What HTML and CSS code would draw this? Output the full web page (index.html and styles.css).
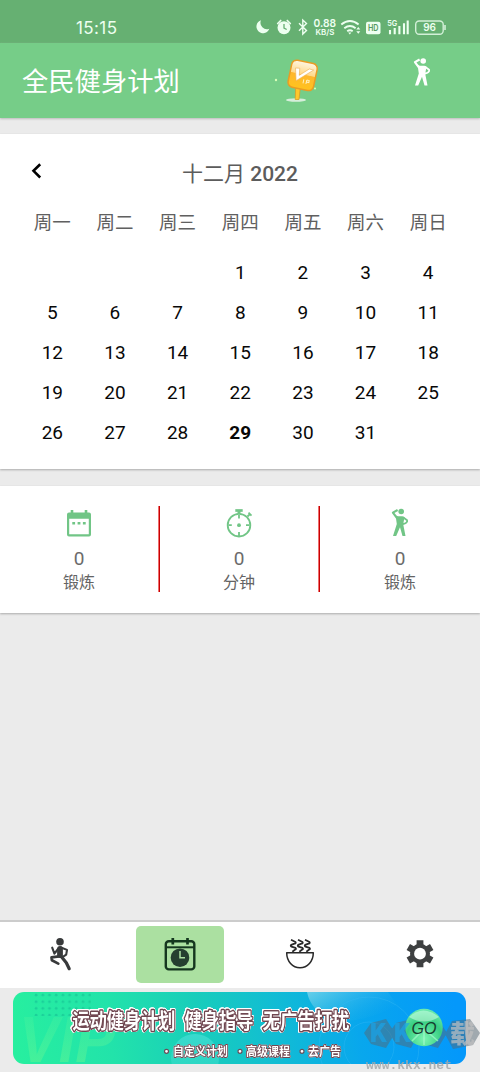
FILE: index.html
```html
<!DOCTYPE html>
<html lang="zh-CN">
<head>
<meta charset="utf-8">
<title>全民健身计划</title>
<link rel="stylesheet" href="styles.css">
</head>
<body>
<svg class="defs" width="0" height="0">
  <symbol id="pose" viewBox="0 0 18 29">
    <circle cx="10.2" cy="3.5" r="2.8" fill="currentColor"/>
    <path d="M6.6 2 1.9 4.6 6 10" fill="none" stroke="currentColor" stroke-width="2.1" stroke-linejoin="round"/>
    <path d="M4.6 7.6 7 8.2h4.5l2 1-1.3 7 2.3 11.8h-3L9 19.2 5.2 28H2l3.8-12z" fill="currentColor"/>
    <path d="M12 9.2l4.1 3.1c.6 1.8-1.1 3.2-4.2 3.7" fill="none" stroke="currentColor" stroke-width="1.8" stroke-linejoin="round"/>
  </symbol>
</svg>
<main class="screen">
  <div class="status">
    <span class="clock">15:15</span>
    <svg class="status-icons" viewBox="0 0 194 20">
      <g fill="#edfff0">
        <path d="M6 2.3A6.6 6.6 0 1 0 14.3 10.7 6.4 6.4 0 0 1 6 2.3z"/>
        <circle cx="29" cy="9.7" r="6.5"/>
        <path d="M22.7 5.5l3-3M35.3 5.5l-3-3" stroke="#edfff0" stroke-width="1.7" stroke-linecap="round"/>
        <path d="M29 6v4l2.7 1.5" fill="none" stroke="#66b072" stroke-width="1.3"/>
      </g>
      <path d="M44 5.2l7.5 7.3L47.8 16V2l3.7 3.4L44 12.8" fill="none" stroke="#edfff0" stroke-width="1.4"/>
      <text x="58.5" y="9" textLength="22.5" lengthAdjust="spacingAndGlyphs" class="net-speed">0.88</text>
      <text x="60.5" y="17" textLength="19" lengthAdjust="spacingAndGlyphs" class="net-unit">KB/S</text>
      <g fill="none" stroke="#edfff0" stroke-width="1.9">
        <path d="M86.3 6.5q8.7-7 17.3 0M89.3 10.2q5.7-4.5 11.3 0M92.2 13.3q2.8-2 5.5 0"/>
      </g>
      <path d="M93.2 14.5h3.2l-1.6 2zM101.3 11.6l2-2.5 2 2.500zM101.3 13.2l2 2.500 2-2.500z" fill="#edfff0"/>
      <rect x="111" y="3.700" width="14.500" height="12.600" rx="2" fill="#edfff0"/>
      <text x="112.900" y="13.400" textLength="10.600" lengthAdjust="spacingAndGlyphs" class="hd">HD</text>
      <text x="132.300" y="8.400" textLength="10" lengthAdjust="spacingAndGlyphs" class="five-g">5G</text>
      <path d="M135 12v4.200M139.700 10v6.200M144.400 8v8.200M149 5.300v10.900M152.700 2.500v13.700" stroke="#edfff0" stroke-width="2.100"/>
      <rect x="160.700" y="3" width="27.500" height="13.200" rx="3.500" fill="none" stroke="#d3f0d8" stroke-width="1.400"/>
      <path d="M190 7v5" stroke="#d3f0d8" stroke-width="1.600"/>
      <text x="168.300" y="13.300" textLength="12.500" class="battery">96</text>
    </svg>
  </div>
  <header class="header">
    <h1 class="title">全民健身计划</h1>
    <svg class="sign" viewBox="0 0 46 48">
      <defs>
        <linearGradient id="gold" x1="0" y1="0" x2="0" y2="1">
          <stop offset="0" stop-color="#fff6e2"/><stop offset=".45" stop-color="#ffd98b"/>
          <stop offset=".48" stop-color="#ffb72d"/><stop offset="1" stop-color="#ffc31e"/>
        </linearGradient>
      </defs>
      <ellipse cx="22" cy="44" rx="10" ry="1.8" fill="#d6eedb"/>
      <path d="M21.700 31.500h4.600l-1.300 12h-3.800z" fill="#ffc72c" stroke="#dd9d25" stroke-width=".8"/>
      <g transform="rotate(12 28 20)">
        <rect x="15.500" y="5.500" width="26" height="27.500" rx="5" fill="url(#gold)" stroke="#e99c24" stroke-width="1.500"/>
        <path d="M20 13.500l4.200-.6 1 7 8.500-8.300 4.500.2-15 14z" fill="#fff" stroke="#eeb25a" stroke-width=".6"/>
        <path d="M30.500 23v4M33.500 23v4M33.500 23h2.500v2h-2.500" fill="none" stroke="#fff1bd" stroke-width="1"/>
      </g>
      <circle cx="2" cy="24" r="1.200" fill="#d8ffb8"/>
      <circle cx="41" cy="32.500" r="1" fill="#d8ffb8"/>
    </svg>
    <svg class="header-pose"><use href="#pose"/></svg>
  </header>
  <section class="card calendar">
    <div class="month">
      <svg class="back" viewBox="0 0 12 18"><path d="M9.200 2.200 2.500 8.800l6.700 6.700" fill="none" stroke="#000" stroke-width="2.600"/></svg>
      <h2 class="month-name">十二月 <b>2022</b></h2>
    </div>
    <div class="week names"><span>周一</span><span>周二</span><span>周三</span><span>周四</span><span>周五</span><span>周六</span><span>周日</span></div>
    <div class="week"><span></span><span></span><span></span><span>1</span><span>2</span><span>3</span><span>4</span></div>
    <div class="week"><span>5</span><span>6</span><span>7</span><span>8</span><span>9</span><span>10</span><span>11</span></div>
    <div class="week"><span>12</span><span>13</span><span>14</span><span>15</span><span>16</span><span>17</span><span>18</span></div>
    <div class="week"><span>19</span><span>20</span><span>21</span><span>22</span><span>23</span><span>24</span><span>25</span></div>
    <div class="week"><span>26</span><span>27</span><span>28</span><span class="today">29</span><span>30</span><span>31</span><span></span></div>
  </section>
  <section class="card stats">
    <div class="stat">
      <svg class="stat-icon" viewBox="0 0 30 30">
        <path d="M5 4.500h20a2 2 0 0 1 2 2v20a2 2 0 0 1-2 2H5a2 2 0 0 1-2-2v-20a2 2 0 0 1 2-2zM5.200 10.800v15.500h19.600V10.800z" fill-rule="evenodd"/>
        <path d="M8 5V2M22 5V2" stroke="#71c586" stroke-width="2.600"/>
        <path d="M8.300 14h2.800v2.600H8.300zM13.600 14h2.800v2.600h-2.800zM18.900 14h2.800v2.600h-2.800z"/>
      </svg>
      <span class="value">0</span><span class="label">锻炼</span>
    </div>
    <i class="rule"></i>
    <div class="stat">
      <svg class="stat-icon" viewBox="0 0 30 30">
        <g fill="none" stroke="#71c586" stroke-width="1.800">
          <circle cx="15" cy="17.200" r="11.300"/>
          <path d="M11.300 2.500h7.400" stroke-width="2.700"/>
          <path d="M15 2v4" stroke-width="3"/>
          <path d="M23.500 8.500l2.500-2.500M24.500 4.600l3 3M15 7v3.500M15 24v4M4.500 17.200h3.300M22 17.200h3.500"/>
        </g>
        <circle cx="15" cy="17.200" r="1.900"/>
      </svg>
      <span class="value">0</span><span class="label">分钟</span>
    </div>
    <i class="rule"></i>
    <div class="stat">
      <svg class="stat-icon"><use href="#pose" x="5" y="1" width="20" height="29"/></svg>
      <span class="value">0</span><span class="label">锻炼</span>
    </div>
  </section>
  <nav class="nav">
    <a class="tab"><svg class="tab-icon" viewBox="0 0 36 36">
      <g fill="none" stroke="#383a3b" stroke-linecap="round" stroke-linejoin="round">
        <circle cx="18" cy="5.700" r="3.800" fill="#383a3b" stroke="none"/>
        <path d="M18 13v6" stroke-width="5.800"/>
        <path d="M16 13l-3.600 4.700-2.200-6M19 11.500l6 2.400-.8 4.800-3 2" stroke-width="2.100"/>
        <path d="M17 20.300l-7.500 1 .4 3 6.400 3.300" stroke-width="2.700"/>
        <path d="M19 20.300l5.300 6.400 2.900 6" stroke-width="3.200"/>
      </g></svg></a>
    <a class="tab active"><svg class="tab-icon" viewBox="0 0 36 36">
      <g fill="none" stroke="#15371f">
        <rect x="3.800" y="5.200" width="28.500" height="28.200" rx="3" stroke-width="2.400"/>
        <path d="M3.500 11.300h29" stroke-width="2"/>
        <path d="M10.800 2v6.500M25.500 2v6.500" stroke-width="2.700"/>
      </g>
      <circle cx="18" cy="21.700" r="9.300" fill="#253f30"/>
      <path d="M18 15v6.700h5" fill="none" stroke="#abe0a1" stroke-width="1.500"/></svg></a>
    <a class="tab"><svg class="tab-icon" viewBox="0 0 36 36">
      <g fill="none" stroke="#292929" stroke-width="1.500" stroke-linejoin="round">
        <path d="M4.700 16.800h26.600c0 8.500-5.800 15-13.300 15s-13.300-6.500-13.300-15z"/>
        <g id="steam" stroke-width="1.800"><path d="M9 3.800l4.500 2.200q.8 1-1 1.700L9.200 8.900q-1 1 .3 1.800l4 1.200q1.200 1-.6 1.900L10.300 15.700"/></g>
        <use href="#steam" x="7"/><use href="#steam" x="14"/>
      </g></svg></a>
    <a class="tab"><svg class="tab-icon" viewBox="0 0 36 36">
      <g stroke="#3e4041" stroke-width="6.800">
        <path d="M18 4.200V31.200M6.300 11l23.400 13.500M6.300 24.500L29.700 11"/>
      </g>
      <circle cx="18" cy="17.700" r="10" fill="#3e4041"/><circle cx="18" cy="17.700" r="5.900" fill="#fff"/>
    </svg></a>
  </nav>
  <footer class="promo">
    <svg class="banner" viewBox="0 0 453 72">
      <defs>
        <linearGradient id="sea" gradientUnits="userSpaceOnUse" x1="0" y1="50" x2="440" y2="0"><stop offset="0" stop-color="#27ef9f"/><stop offset=".22" stop-color="#22e3aa"/><stop offset=".42" stop-color="#18cdbb"/><stop offset=".58" stop-color="#12bed2"/><stop offset=".78" stop-color="#08a7ed"/><stop offset="1" stop-color="#0498fb"/></linearGradient>
        <linearGradient id="glow" x1="0" y1="0" x2="1" y2=".6"><stop offset="0" stop-color="#85d8ed" stop-opacity=".75"/><stop offset="1" stop-color="#20aee9" stop-opacity="0"/></linearGradient>
        <linearGradient id="bubble" x1="0" y1="0" x2="0" y2="1"><stop offset="0" stop-color="#45ddd5"/><stop offset="1" stop-color="#37ddc6" stop-opacity=".6"/></linearGradient>
        <linearGradient id="vip" x1="0" y1="0" x2="0" y2="1"><stop offset="0" stop-color="#57f6a0" stop-opacity=".15"/><stop offset="1" stop-color="#6bf58f" stop-opacity=".55"/></linearGradient>
        <radialGradient id="ball" cx=".5" cy=".8" r=".8"><stop offset="0" stop-color="#7bf5b2"/><stop offset=".6" stop-color="#38ce82"/><stop offset="1" stop-color="#6eedb1"/></radialGradient>
        <pattern id="dots" width="6.700" height="6.700" patternUnits="userSpaceOnUse"><circle cx="3" cy="3" r="1.400" fill="#1bd09a"/></pattern>
      </defs>
      <rect width="453" height="72" fill="url(#sea)"/>
      <rect x="20" width="58" height="24" fill="url(#dots)"/>
      <text x="6" y="70" class="vip" textLength="96" lengthAdjust="spacingAndGlyphs" fill="url(#vip)">VIP</text>
      <circle cx="182" cy="66" r="24" fill="url(#bubble)" opacity=".75"/>
      <path d="M294 0q5 24 35 29 27 0 55-16l-9-13z" fill="url(#glow)"/>
      <g fill="none" stroke="#36b9f5" opacity=".4"><circle cx="356" cy="55" r="25"/><circle cx="356" cy="55" r="50"/></g>
      <g class="slogan">
        <text x="59.500" y="36" textLength="103" lengthAdjust="spacingAndGlyphs">运动健身计划</text>
        <text x="171.500" y="36" textLength="69" lengthAdjust="spacingAndGlyphs">健身指导</text>
        <text x="249.500" y="36" textLength="87" lengthAdjust="spacingAndGlyphs">无广告打扰</text>
      </g>
      <g class="features">
        <text x="160" y="63.500" textLength="55" lengthAdjust="spacingAndGlyphs">自定义计划</text>
        <text x="233" y="63.500" textLength="44" lengthAdjust="spacingAndGlyphs">高级课程</text>
        <text x="295" y="63.500" textLength="33" lengthAdjust="spacingAndGlyphs">去广告</text>
      </g>
      <g fill="#fff" stroke="#69505b" stroke-width="1.200"><circle cx="153.500" cy="59.300" r="2"/><circle cx="227" cy="59.300" r="2"/><circle cx="289" cy="59.300" r="2"/></g>
    </svg>
    <svg class="watermark" viewBox="0 0 116 69">
      <g opacity=".5">
        <path d="M7 20l15-4 9 14-9 15-15-4-7-11zM32 20l15-4 8 14-8 15-15-4-7-11zM60 20l14-4 9 14-9 15-14-4-6-11zM88 18l18-2 10 14-7 12-20 4-8-15z" fill="#566774"/>
      </g>
      <circle cx="60" cy="24.500" r="18.700" fill="url(#ball)"/>
      <path d="M45 14q14-13 30 0-15 9-30 0z" fill="#cfffe6" opacity=".55"/>
      <path d="M60 26v16M60 26l14 12M60 26L48 38" stroke="#a9fbd0" stroke-width="1.600" opacity=".65"/>
      <g class="mark"><text x="5" y="39">K</text><text x="29" y="39">K</text><text x="86" y="40" class="mark-cn">载</text></g>
      <text x="47.500" y="30.500" textLength="25" lengthAdjust="spacingAndGlyphs" class="go">GO</text>
      <text x="2" y="65.500" textLength="86" lengthAdjust="spacingAndGlyphs" class="site">www.kkx.net</text>
    </svg>
  </footer>
</main>
</body>
</html>
```

FILE: styles.css
```css
* { box-sizing: border-box; }
body { margin: 0; background: #ebebeb; font-family: Roboto, "Noto Sans CJK SC", sans-serif; }
.defs { display: block; }
.screen { width: 480px; height: 1072px; display: flex; flex-direction: column; overflow: hidden; position: relative; }
.status { height: 43px; flex: none; background: #66b072; display: flex; align-items: flex-start; padding: 18px 0 0 76px; color: #edfff0; }
.clock { width: 178px; font: 400 17px/20px Inter, sans-serif; letter-spacing: .4px; }
.status-icons { width: 194px; height: 20px; margin-left: 1px; }
.status-icons text { fill: #edfff0; font-family: Inter, sans-serif; font-weight: 600; }
.status-icons .net-speed { font-size: 11px; }
.status-icons .net-unit { font-size: 8px; }
.status-icons .hd { font-size: 9px; fill: #549b60; }
.status-icons .five-g { font-size: 8px; }
.status-icons .battery { font-size: 10px; }
.header { height: 75px; flex: none; background: #76cd88; display: flex; align-items: flex-start; padding-left: 22px; box-shadow: 0 1px 2px #bbb; }
.title { margin: 19px 0 0; width: 252px; font-size: 26.300px; line-height: 40px; font-weight: 400; color: #fff; }
.sign { width: 46px; height: 48px; margin-top: 13px; }
.header-pose { width: 18px; height: 30px; color: #fff; margin: 14px 0 0 93px; }
.card { background: #fff; box-shadow: 0 1px 2px #aaa; flex: none; }
.calendar { margin-top: 16px; height: 335px; padding: 20px 21px 0; }
.month { height: 40px; display: grid; grid-template-columns: 20px 1fr 20px; align-items: center; }
.back { width: 12px; height: 18px; margin: 0 0 6px 10px; }
.month-name { margin: 0; text-align: center; font-size: 21px; font-weight: 400; line-height: 40px; color: #5c5c5c; }
.month-name b { font-weight: 500; }
.week { display: grid; grid-template-columns: repeat(7, 1fr); height: 40px; line-height: 40px; text-align: center; font-size: 19px; color: #080808; margin-right: -.5px; }
.names { height: 59px; line-height: 58px; font-size: 18.500px; color: #606060; }
.today { font-weight: 700; }
.stats { margin-top: 17px; height: 127px; display: grid; grid-template-columns: 158px 2px 158px 2px 1fr; padding-top: 20px; }
.stat { display: flex; flex-direction: column; align-items: center; color: #646464; }
.stat-icon { width: 30px; height: 32px; margin-top: 1px; fill: #71c586; color: #71c586; }
.value { font-size: 19px; line-height: 24px; margin-top: 8px; font-weight: 400; color: #6b6b6b; }
.label { font-size: 16px; line-height: 20px; margin-top: 2px; }
.stats .rule { width: 2px; height: 86px; background: linear-gradient(90deg, #ef6d6d 50%, #c80000 50%); }
.nav { height: 68px; flex: none; margin-top: auto; background: #fff; border-top: 2px solid #ccc; display: grid; grid-template-columns: repeat(4, 1fr); }
.tab { margin: 4px 16px 5px; display: flex; justify-content: center; padding-top: 10px; border-radius: 5px; }
.tab-icon { width: 36px; height: 36px; }
.active { background: #abe0a1; }
.promo { height: 84px; flex: none; padding: 4px 0 0 13px; position: relative; }
.banner { width: 453px; height: 72px; border-radius: 11px; display: block; }
.vip { font: italic 700 64px "Liberation Sans", sans-serif; }
.slogan text, .features text { fill: #fff; paint-order: stroke; stroke: #704751; stroke-linejoin: round; font-family: "Noto Sans CJK SC", sans-serif; }
.slogan text { font-size: 21px; font-weight: 700; stroke-width: 3px; filter: drop-shadow(.6px 0 0 #fff) drop-shadow(-.6px 0 0 #fff) drop-shadow(0 .6px 0 #fff) drop-shadow(0 -.6px 0 #fff); }
.features text { font-size: 12px; font-weight: 700; stroke-width: 2px; filter: drop-shadow(0 0 .5px #fff); }
.watermark { position: absolute; left: 364px; top: 15px; width: 116px; height: 69px; }
.mark text { font: 900 25px "Noto Sans CJK SC", sans-serif; fill: #18a6ec; opacity: .65; }
.mark .mark-cn { fill: #c1c1c1; opacity: .7; }
.go { font: italic 17px "Liberation Sans", sans-serif; fill: #173e30; }
.site { font: 700 12px "Liberation Mono", monospace; fill: #a3a8ab; opacity: .85; }
```
